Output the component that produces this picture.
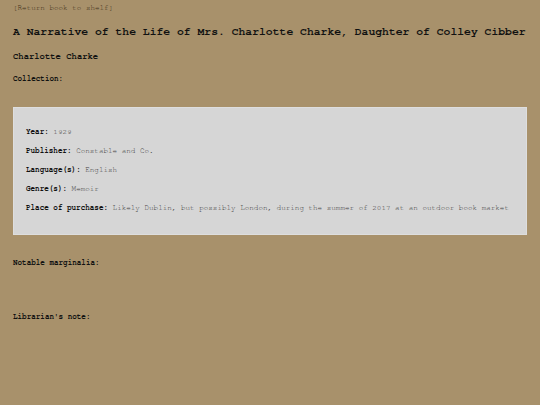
export default function App() {
  const fields = [
    { label: "Year", value: "1929" },
    { label: "Publisher", value: "Constable and Co." },
    { label: "Language(s)", value: "English" },
    { label: "Genre(s)", value: "Memoir" },
    {
      label: "Place of purchase",
      value: "Likely Dublin, but possibly London, during the summer of 2017 at an outdoor book market",
    },
  ];

  return (
    <div
      className="min-h-[405px] w-full bg-[#a8916b] px-[13px] text-[#111111]"
      style={{
        fontFamily:
          '"Nimbus Mono PS", "Nimbus Mono L", "FreeMono", "Courier 10 Pitch", "Liberation Mono", "Courier New", monospace',
      }}
    >
      <div className="text-[7.6px] leading-[16px] text-[#3e3018]">[Return book to shelf]</div>
      <h1 className="mt-[8px] text-[11.4px] font-bold leading-[16px] whitespace-nowrap">
        A Narrative of the Life of Mrs. Charlotte Charke, Daughter of Colley Cibber
      </h1>
      <h2 className="mt-[9px] text-[8.9px] font-bold leading-[16px]">Charlotte Charke</h2>
      <div className="mt-[6px] text-[7.6px] font-bold leading-[16px]">Collection:</div>

      {/* Details card */}
      <div className="mt-[20px] border border-[#dedede] bg-[#d6d6d6] px-[12px] pt-[15px] pb-[16px]">
        {fields.map((f) => (
          <div key={f.label} className="text-[7.6px] leading-[19px] whitespace-nowrap">
            <span className="font-bold text-[#111111]">{f.label}:</span>{" "}
            <span className="text-[#404040]">{f.value}</span>
          </div>
        ))}
      </div>

      <div className="mt-[20px] text-[7.6px] font-bold leading-[16px]">Notable marginalia:</div>
      <div className="mt-[38px] text-[7.6px] font-bold leading-[16px]">Librarian's note:</div>
    </div>
  );
}
